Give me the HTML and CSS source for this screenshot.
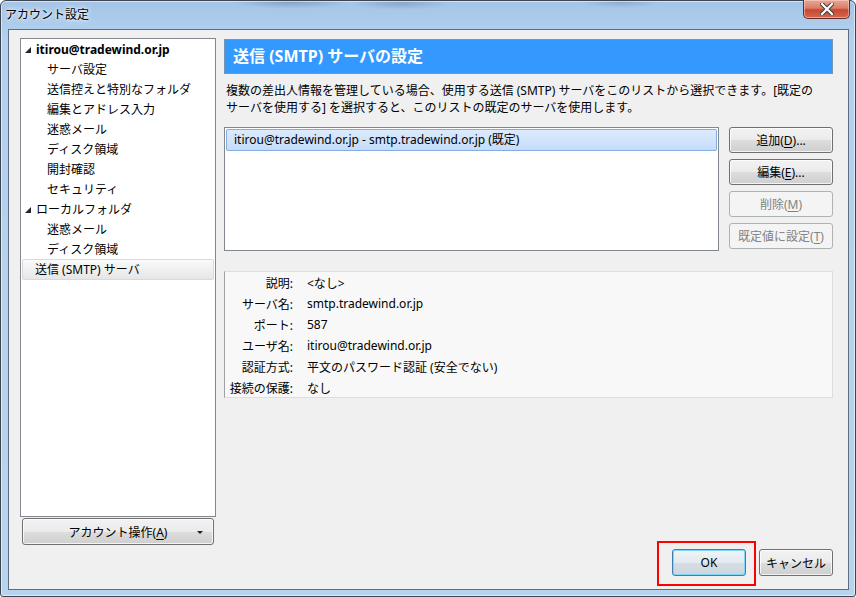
FILE: index.html
```html
<!DOCTYPE html>
<html lang="ja">
<head>
    <meta charset="UTF-8">
    <title>アカウント設定</title>
    <link rel="stylesheet" href="styles.css">
</head>
<body>
    <div class="window">
        <div class="titlebar">
            <span class="title">アカウント設定</span>
            <div class="close-btn">
                <svg width="14" height="12" viewBox="0 0 14 12">
                    <path d="M2 1 L12 11 M12 1 L2 11" stroke="#3a3a3a" stroke-width="4.2" stroke-linecap="square"/>
                    <path d="M2 1 L12 11 M12 1 L2 11" stroke="#ffffff" stroke-width="2.2" stroke-linecap="square"/>
                </svg>
            </div>
        </div>

        <div class="client">
            <div class="sidebar">
                <ul class="tree">
                    <li class="tree-item top bold"><span class="twisty"></span>itirou@tradewind.or.jp</li>
                    <li class="tree-item child">サーバ設定</li>
                    <li class="tree-item child">送信控えと特別なフォルダ</li>
                    <li class="tree-item child">編集とアドレス入力</li>
                    <li class="tree-item child">迷惑メール</li>
                    <li class="tree-item child">ディスク領域</li>
                    <li class="tree-item child">開封確認</li>
                    <li class="tree-item child">セキュリティ</li>
                    <li class="tree-item top"><span class="twisty"></span>ローカルフォルダ</li>
                    <li class="tree-item child">迷惑メール</li>
                    <li class="tree-item child">ディスク領域</li>
                    <li class="tree-item root selected">送信 (SMTP) サーバ</li>
                </ul>
                <button class="btn account-btn">
                    <span>アカウント操作(<u>A</u>)</span>
                    <span class="caret"></span>
                </button>
            </div>

            <div class="main">
                <div class="page-header">送信 (SMTP) サーバの設定</div>
                <p class="desc">複数の差出人情報を管理している場合、使用する送信 (SMTP) サーバをこのリストから選択できます。[既定の<br>サーバを使用する] を選択すると、このリストの既定のサーバを使用します。</p>

                <div class="server-row">
                    <div class="server-list">
                        <div class="server-item selected">itirou@tradewind.or.jp - smtp.tradewind.or.jp (既定)</div>
                    </div>
                    <div class="server-buttons">
                        <button class="btn">追加(<u>D</u>)...</button>
                        <button class="btn">編集(<u>E</u>)...</button>
                        <button class="btn" disabled>削除(<u>M</u>)</button>
                        <button class="btn" disabled>既定値に設定(<u>T</u>)</button>
                    </div>
                </div>

                <dl class="details">
                    <dt>説明:</dt><dd>&lt;なし&gt;</dd>
                    <dt>サーバ名:</dt><dd>smtp.tradewind.or.jp</dd>
                    <dt>ポート:</dt><dd>587</dd>
                    <dt>ユーザ名:</dt><dd>itirou@tradewind.or.jp</dd>
                    <dt>認証方式:</dt><dd>平文のパスワード認証 (安全でない)</dd>
                    <dt>接続の保護:</dt><dd>なし</dd>
                </dl>

                <div class="dialog-buttons">
                    <div class="ok-wrap">
                        <button class="btn default-btn">OK</button>
                    </div>
                    <button class="btn">キャンセル</button>
                </div>
            </div>
        </div>
    </div>
</body>
</html>
```

FILE: styles.css
```css
* {
    box-sizing: border-box;
}

body {
    margin: 0;
    width: 856px;
    height: 597px;
    overflow: hidden;
    font-family: "Noto Sans", "Noto Sans CJK JP", sans-serif;
    font-size: 12px;
    color: #000;
    background: #ffffff;
}

.window {
    width: 856px;
    height: 597px;
    border: 1px solid #3d4550;
    border-radius: 6px 6px 3px 3px;
    background:
        radial-gradient(ellipse 60px 8px at 290px 0, rgba(90,110,140,0.45), transparent),
        radial-gradient(ellipse 50px 7px at 400px 2px, rgba(90,110,140,0.35), transparent),
        radial-gradient(ellipse 40px 6px at 620px 1px, rgba(90,110,140,0.3), transparent),
        linear-gradient(#a4c5e8 0%, #b3d0ee 6%, #b8d3ee 100%);
    display: flex;
    flex-direction: column;
    box-shadow: inset 0 0 0 1px rgba(255,255,255,0.55);
}

.titlebar {
    height: 28px;
    display: flex;
    justify-content: space-between;
    align-items: flex-start;
    padding-left: 4px;
}

.title {
    margin-top: 5px;
    line-height: 18px;
    text-shadow: 0 0 6px #ffffff, 0 0 3px #ffffff;
}

.close-btn {
    width: 47px;
    height: 19px;
    margin-top: -1px;
    margin-right: 5px;
    border: 1px solid #6a2c22;
    border-top: none;
    border-radius: 0 0 5px 5px;
    background: linear-gradient(#e8a796 0%, #db7d69 45%, #c8462f 55%, #d16a52 100%);
    box-shadow: inset 0 0 0 1px rgba(255,220,210,0.5);
    display: flex;
    align-items: center;
    justify-content: center;
}

.client {
    flex: 1;
    margin: 0 6px 6px 7px;
    background: #f0f0f0;
    border: 1px solid #5e6d80;
    display: flex;
    padding: 8px 15px 13px 11px;
}

/* left tree */
.sidebar {
    width: 196px;
    display: flex;
    flex-direction: column;
}

.tree {
    list-style: none;
    margin: 0;
    padding: 0;
    height: 479px;
    background: #fff;
    border: 1px solid #828790;
}

.tree-item {
    height: 20px;
    line-height: 22px;
    white-space: nowrap;
}

.tree-item.top {
    padding-left: 4px;
}

.tree-item.bold {
    font-weight: bold;
}

.tree-item.child {
    padding-left: 26px;
}

.tree-item.root {
    padding-left: 12px;
}

.tree-item.selected {
    margin: 0 1px;
    height: 21px;
    line-height: 20px;
    border: 1px solid #d9d9d9;
    border-radius: 2px;
    background: linear-gradient(#fafafa, #e6e6e6);
}

.twisty {
    display: inline-block;
    width: 0;
    height: 0;
    border-left: 6px solid transparent;
    border-bottom: 6px solid #262626;
    margin-right: 5px;
    vertical-align: 1px;
}

/* buttons */
.btn {
    height: 26px;
    padding: 0 4px;
    font-family: inherit;
    font-size: 12px;
    color: #000;
    border: 1px solid #707070;
    border-radius: 3px;
    background: linear-gradient(#f2f2f2 0%, #ebebeb 50%, #dddddd 51%, #cfcfcf 100%);
    box-shadow: inset 0 0 0 1px rgba(255,255,255,0.75);
    white-space: nowrap;
}

.btn u {
    text-underline-offset: 2px;
}

.btn:disabled {
    color: #838383;
    border-color: #adb2b5;
    background: #f4f4f4;
    box-shadow: none;
}

.account-btn {
    width: 192px;
    height: 27px;
    margin: 1px 0 0 2px;
    display: flex;
    align-items: center;
    justify-content: center;
    position: relative;
}

.caret {
    position: absolute;
    right: 10px;
    top: 12px;
    border-left: 3px solid transparent;
    border-right: 3px solid transparent;
    border-top: 3px solid #222;
}

/* right panel */
.main {
    width: 609px;
    margin-left: 8px;
    display: flex;
    flex-direction: column;
}

.page-header {
    margin-top: 1px;
    height: 35px;
    line-height: 33px;
    padding-left: 8px;
    background: #3399ff;
    border: 1px solid #7895b4;
    color: #fff;
    font-weight: bold;
    font-size: 16px;
}

.desc {
    margin: 8px 0 11px;
    padding-left: 2px;
    line-height: 17px;
    white-space: nowrap;
}

.server-row {
    display: flex;
    gap: 10px;
}

.server-list {
    width: 495px;
    height: 124px;
    background: #fff;
    border: 1px solid #828790;
    padding: 1px;
}

.server-item {
    height: 22px;
    line-height: 20px;
    padding-left: 7px;
    white-space: nowrap;
}

.server-item.selected {
    border: 1px solid #84acdd;
    border-radius: 2px;
    background: linear-gradient(#dcebfc, #c4dcfb);
}

.server-buttons {
    width: 104px;
    display: flex;
    flex-direction: column;
    gap: 6px;
}

.server-buttons .btn {
    width: 104px;
}

.details {
    margin: 20px 0 0;
    height: 127px;
    display: grid;
    grid-template-columns: 72px 1fr;
    grid-auto-rows: 21px;
    column-gap: 10px;
    align-items: center;
    background: #f7f8f7;
    border: 1px solid #dedede;
    border-left-color: #a0a0a0;
}

.details dt {
    text-align: right;
    padding-right: 4px;
    white-space: nowrap;
}

.details dd {
    margin: 0;
    white-space: nowrap;
}

.dialog-buttons {
    margin-top: auto;
    display: flex;
    justify-content: flex-end;
    gap: 13px;
}

.dialog-buttons .btn {
    height: 27px;
    width: 74px;
}

.ok-wrap {
    position: relative;
}

/* red annotation box round the OK button */
.ok-wrap::after {
    content: "";
    position: absolute;
    left: -15px;
    top: -8px;
    right: -10px;
    bottom: -10px;
    border: 2px solid #ff0000;
}

.default-btn {
    border-color: #3c7fb1;
    box-shadow: inset 0 0 0 1px #7fd6f7;
    background: linear-gradient(#eef3f6 0%, #e3ebf0 50%, #d6dee4 51%, #cdd6dc 100%);
}
```
